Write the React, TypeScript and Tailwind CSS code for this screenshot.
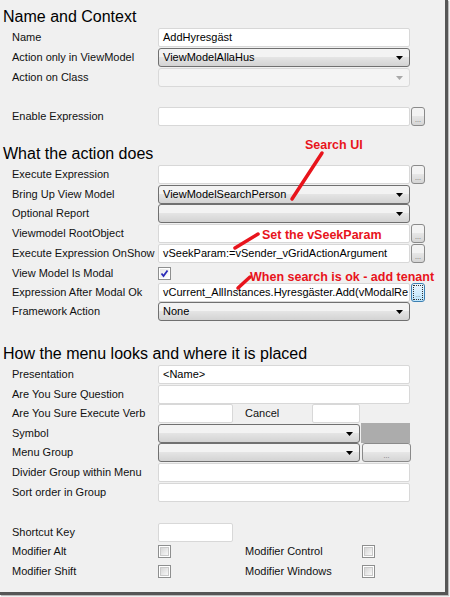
import React from "react";

const Arrow = ({ disabled = false }: { disabled?: boolean }) => (
  <svg width="7" height="4" viewBox="0 0 7 4" className="absolute right-[6px] top-[7px]">
    <polygon points="0,0 7,0 3.5,4" fill={disabled ? "#a9a9a9" : "#000"} />
  </svg>
);

const Input = ({ w = 252, text = "" }: { w?: number; text?: string }) => (
  <div
    className="h-[19px] bg-white border border-[#d8d8d8] rounded-[2px] pl-[4px] text-[11px] leading-[17px] overflow-hidden whitespace-nowrap text-black"
    style={{ width: w }}
  >
    {text}
  </div>
);

const Combo = ({ w = 252, text = "", disabled = false }: { w?: number; text?: string; disabled?: boolean }) => (
  <div
    className={
      disabled
        ? "relative h-[19px] border border-[#d9d9d9] rounded-[3px] bg-[#f4f4f4] pl-[4px] text-[11px] leading-[17px]"
        : "relative h-[19px] border border-[#707070] rounded-[3px] bg-gradient-to-b from-[#f3f3f3] from-45% via-[#e4e4e4] via-50% to-[#d3d3d3] pl-[4px] text-[11px] leading-[17px] text-black"
    }
    style={{ width: w }}
  >
    {text}
    <Arrow disabled={disabled} />
  </div>
);

const Dots = ({ focused = false, w = 14 }: { focused?: boolean; w?: number }) => (
  <div
    className={
      focused
        ? "ml-[1px] h-[19px] border border-[#3c7fb1] rounded-[3px] bg-gradient-to-b from-[#eaf6fd] to-[#bee6fd] p-[1px] overflow-hidden"
        : "ml-[1px] h-[19px] border border-[#8a8a8a] rounded-[3px] bg-gradient-to-b from-[#f3f3f3] from-45% via-[#e6e6e6] via-50% to-[#d5d5d5] overflow-hidden"
    }
    style={{ width: w }}
  >
    <div
      className={
        focused
          ? "w-full h-full border border-dotted border-[#333] flex items-end justify-center text-[6px] leading-[8px] text-[#555] overflow-hidden"
          : "w-full h-full flex items-end justify-center pb-[1px] text-[7px] leading-[9px] text-[#666] overflow-hidden"
      }
    >
      ...
    </div>
  </div>
);

const Check = ({ checked = false }: { checked?: boolean }) => (
  <div className="w-[13px] h-[13px] border border-[#8e8f8f] bg-white p-[1px]">
    <div
      className={
        checked
          ? "w-full h-full bg-gradient-to-br from-[#e6e6e6] to-[#ffffff] relative"
          : "w-full h-full bg-gradient-to-br from-[#d6d6d6] to-[#f8f8f8] border border-[#c9c9c9]"
      }
    >
      {checked && (
        <svg width="9" height="9" viewBox="0 0 9 9" className="absolute left-0 top-0">
          <path d="M1.5 4.5 L3.5 7 L7.5 1.5" stroke="#2b2bb8" strokeWidth="1.8" fill="none" />
        </svg>
      )}
    </div>
  </div>
);

const Row = ({ label, children, h = 20 }: { label: string; children?: React.ReactNode; h?: number }) => (
  <div className="flex items-center" style={{ height: h }}>
    <div className="w-[158px] pl-[12px] shrink-0 text-[11px] text-[#111] whitespace-nowrap">{label}</div>
    {children}
  </div>
);

const Header = ({ children, className }: { children: React.ReactNode; className: string }) => (
  <div className={"pl-[3px] text-[16px] leading-[20px] h-[20px] text-black whitespace-nowrap " + className}>{children}</div>
);

export default function App() {
  return (
    <div className="w-[450px] h-[597px] bg-[#fbfbfb] relative overflow-hidden font-['Liberation_Sans',Arial,sans-serif]">
      <div className="w-[448px] h-[595px] bg-[#f0f0f0] border-r-[3px] border-b-[3px] border-[#565656] shadow-[1px_1px_1px_rgba(0,0,0,0.25)] flex flex-col">
        <Header className="mt-[7px]">Name and Context</Header>
        <Row label="Name">
          <Input text="AddHyresgäst" />
        </Row>
        <Row label="Action only in ViewModel">
          <Combo text="ViewModelAllaHus" />
        </Row>
        <Row label="Action on Class">
          <Combo disabled />
        </Row>
        <div className="h-[19px]" />
        <Row label="Enable Expression">
          <Input />
          <Dots />
        </Row>

        <Header className="mt-[18px]">What the action does</Header>
        <Row label="Execute Expression">
          <Input />
          <Dots />
        </Row>
        <Row label="Bring Up View Model">
          <Combo text="ViewModelSearchPerson" />
        </Row>
        <Row label="Optional Report" h={19}>
          <Combo />
        </Row>
        <Row label="Viewmodel RootObject">
          <Input />
          <Dots />
        </Row>
        <Row label="Execute Expression OnShow">
          <Input text="vSeekParam:=vSender_vGridActionArgument" />
          <Dots />
        </Row>
        <Row label="View Model Is Modal">
          <Check checked />
        </Row>
        <Row label="Expression After Modal Ok" h={19}>
          <Input text="vCurrent_AllInstances.Hyresgäster.Add(vModalRe" />
          <Dots focused />
        </Row>
        <Row label="Framework Action" h={19}>
          <Combo text="None" />
        </Row>

        <Header className="mt-[23px]">How the menu looks and where it is placed</Header>
        <Row label="Presentation">
          <Input text="<Name>" />
        </Row>
        <Row label="Are You Sure Question">
          <Input />
        </Row>
        <Row label="Are You Sure Execute Verb" h={19}>
          <Input w={75} />
          <div className="w-[79px] pl-[12px] text-[11px] text-[#111]">Cancel</div>
          <Input w={48} />
        </Row>
        <Row label="Symbol">
          <Combo w={202} />
          <div className="ml-[1px] w-[49px] h-[20px] bg-[#acacac]" />
        </Row>
        <Row label="Menu Group" h={19}>
          <Combo w={202} />
          <div className="ml-[1px]">
            <Dots w={49} />
          </div>
        </Row>
        <Row label="Divider Group within Menu">
          <Input />
        </Row>
        <Row label="Sort order in Group">
          <Input />
        </Row>
        <div className="h-[20px]" />
        <Row label="Shortcut Key">
          <Input w={75} />
        </Row>
        <Row label="Modifier Alt" h={19}>
          <Check />
          <div className="w-[87px] pl-[74px] text-[11px] text-[#111] whitespace-nowrap">Modifier Control</div>
          <div className="ml-[104px]">
            <Check />
          </div>
        </Row>
        <Row label="Modifier Shift">
          <Check />
          <div className="w-[87px] pl-[74px] text-[11px] text-[#111] whitespace-nowrap">Modifier Windows</div>
          <div className="ml-[104px]">
            <Check />
          </div>
        </Row>
      </div>

      <svg width="450" height="597" className="absolute left-0 top-0 pointer-events-none">
        <g stroke="#e8141c" strokeWidth="3.5" strokeLinecap="round">
          <line x1="322" y1="153" x2="292" y2="199" />
          <line x1="258" y1="234" x2="235" y2="248" />
          <line x1="250" y1="277" x2="238" y2="288" />
        </g>
      </svg>
      <div className="absolute left-[305px] top-[139px] text-[12.5px] leading-none font-bold text-[#e8141c] whitespace-nowrap">
        Search UI
      </div>
      <div className="absolute left-[262px] top-[229px] text-[12.5px] leading-none font-bold text-[#e8141c] whitespace-nowrap">
        Set the vSeekParam
      </div>
      <div className="absolute left-[250px] top-[271px] text-[12.5px] leading-none font-bold text-[#e8141c] whitespace-nowrap">
        When search is ok - add tenant
      </div>
    </div>
  );
}
